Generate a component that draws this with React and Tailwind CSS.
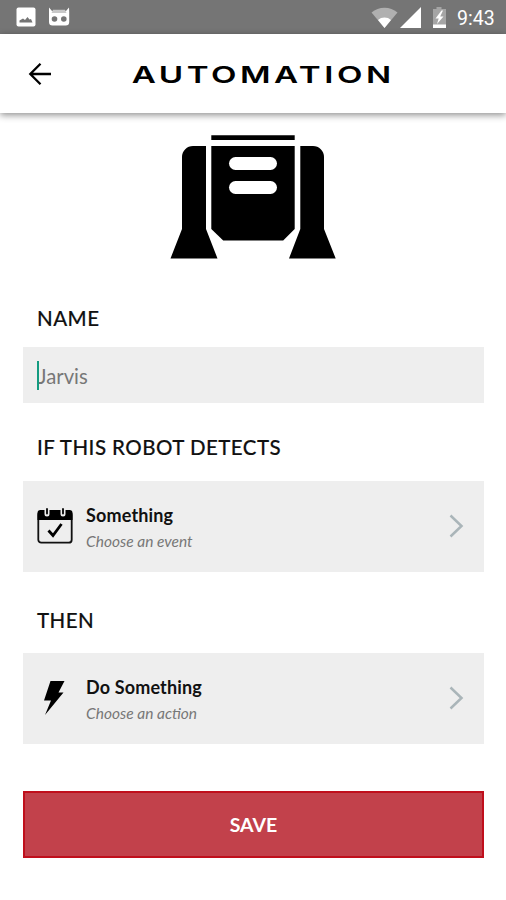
import React, { useState } from "react";

const StatusBar = () => (
  <div className="flex h-[34px] items-center justify-between bg-[#757575] pl-4 pr-[10px] text-white">
    <div className="flex items-center gap-[12px]">
      <svg className="h-5 w-5" viewBox="0 0 20 20">
        <rect x="0.5" y="0.5" width="19" height="19" rx="2" fill="#fff" />
        <path d="M3.500 15.500v-2L7 11.500l2 1.500 2.500-3 2 2.500 1.500-.5 1.500 3.500z" fill="#757575" />
      </svg>
      <svg className="h-5 w-[22px]" viewBox="0 0 22 20">
        <path
          d="M1 .5 4 4h14l3-3.500.2 4.500V15a3.500 3.500 0 0 1-3.500 3.500H4.500A3.500 3.500 0 0 1 1 15z"
          fill="#fff"
        />
        <path d="M5 2.700h12l1.500 3.300h-15z" fill="#c8c8c8" />
        <circle cx="6.500" cy="12" r="2.800" fill="#757575" />
        <circle cx="15.800" cy="12" r="2.800" fill="#757575" />
      </svg>
    </div>
    <div className="flex items-center">
      <svg className="h-[22px] w-[27px]" viewBox="0 0 27 22">
        <path d="M.5 6.500a20 20 0 0 1 26 0L13.500 22z" fill="#b0b0b0" />
        <path d="M7 14a10 10 0 0 1 13 0l-6.500 8z" fill="#fff" />
      </svg>
      <svg className="ml-[2px] h-[22px] w-[21px]" viewBox="0 0 21 22">
        <path d="M21 1v21H0z" fill="#fff" />
      </svg>
      <svg className="ml-[11px] h-[22px] w-[15px]" viewBox="0 0 15 22">
        <path d="M4.500 1h5v2H14v16H1V3h3.500z" fill="#a5a5a5" />
        <path d="M1 18.500h13V22H1z" fill="#fff" />
        <path d="M9.500 4.500 3.500 12.500h3.200L5 18l6.500-7.500H8.200L11 4.500z" fill="#fff" />
      </svg>
      <span className="ml-[10px] w-[39px] whitespace-nowrap pt-[3px] font-['Roboto',sans-serif] text-[19.5px] leading-none">
        9:43
      </span>
    </div>
  </div>
);

const Robot = () => (
  <svg className="ml-[147px] block h-[124px] w-[166px]" viewBox="170 135 166 124">
    <path d="M211.300 135.300h83.400v4.700h-83.400z" />
    <path d="M211.300 146h83.400v83l-11.500 11.500h-60L211.300 229z" />
    <path d="M206 146v83l11.500 29.500h-47L182 229v-72a11 11 0 0 1 11-11z" />
    <path d="M300.300 146v83L289 258.500h46.700L324 229v-72a11 11 0 0 0-11-11z" />
    <rect x="229" y="157" width="48" height="13" rx="6.500" fill="#fff" />
    <rect x="229" y="181" width="48" height="13" rx="6.500" fill="#fff" />
  </svg>
);

const CalendarIcon = () => (
  <svg className="h-9 w-9" viewBox="0 0 36 36">
    <rect x="1.300" y="4" width="33.400" height="30.700" rx="3" fill="none" stroke="#111" strokeWidth="1.800" />
    <path d="M.5 12V5a3 3 0 0 1 3-3h29a3 3 0 0 1 3 3v7z" />
    <path d="M10 0v6M26 0v6" stroke="#eee" strokeWidth="5" strokeLinecap="round" />
    <path d="M10 1v4.500M26 1v4.500" stroke="#000" strokeWidth="1.800" strokeLinecap="round" />
    <path d="m11.500 22.500 4.500 5 8.500-11.500" fill="none" stroke="#000" strokeWidth="2.800" />
  </svg>
);

const BoltIcon = () => (
  <svg className="h-9 w-9" viewBox="0 0 36 36">
    <path d="M13.500 1H27.500L21.500 12.500h5L8 35l6-14.500H7z" />
  </svg>
);

const Label = ({ children, className }) => (
  <h2
    className={`pl-[14px] text-[20.5px] font-medium leading-6 tracking-[0.45px] text-[#111] [-webkit-text-stroke:0.15px_#111] ${className}`}
  >
    {children}
  </h2>
);

const Row = ({ icon, title, subtitle }) => (
  <button className="flex h-[91px] w-full items-center bg-[#eeeeee] pb-[2px] pl-[14px] pr-5 text-left">
    {icon}
    <span className="ml-[13px] flex flex-1 flex-col pt-[4px]">
      <span className="text-[18px] font-bold leading-[26px] tracking-[0.15px] text-[#111]">{title}</span>
      <span className="text-[15.5px] italic leading-[26px] text-[#777]">{subtitle}</span>
    </span>
    <svg className="h-6 w-[15px]" viewBox="0 0 15 24">
      <path d="m1.500 1.500 11 10.500-11 10.500" fill="none" stroke="#aab5b9" strokeWidth="2.500" />
    </svg>
  </button>
);

export default function App() {
  const [name, setName] = useState("");

  return (
    <div className="h-[900px] w-[506px] overflow-hidden bg-white font-['Lato',sans-serif]">
      <StatusBar />

      <header className="grid h-[79px] grid-cols-[80px_1fr_60px] items-center bg-white shadow-[0_2px_7px_rgba(0,0,0,0.45)]">
        <button className="pl-7" aria-label="Back">
          <svg className="h-6 w-6" viewBox="0 0 24 24" fill="none" stroke="#000" strokeWidth="2.300">
            <path d="M23 12H2.500M12.500 1.800 2.300 12l10.200 10.200" />
          </svg>
        </button>
        <h1 className="origin-center scale-x-[1.41] justify-self-center whitespace-nowrap pt-[2px] font-['Inter',sans-serif] text-[23.5px] font-semibold leading-none tracking-[2.5px]">
          AUTOMATION
        </h1>
      </header>

      <main className="pl-[23px] pr-[22px] pt-[22px]">
        <Robot />

        <Label className="mt-[47px]">NAME</Label>
        <div className="relative mt-[17px] h-[56px] bg-[#eeeeee]">
          <input
            value={name}
            onChange={(e) => setName(e.target.value)}
            placeholder="Jarvis"
            className="h-full w-full bg-transparent pl-[15px] pt-[2px] text-[20.3px] outline-none placeholder:text-[#777]"
          />
          <span className="absolute left-[14px] top-[14px] h-[29px] w-[2px] bg-[#139b80]" />
        </div>

        <Label className="mt-[32px] mb-[22px]">IF THIS ROBOT DETECTS</Label>
        <Row icon={<CalendarIcon />} title="Something" subtitle="Choose an event" />

        <Label className="mt-[36px] mb-[21px]">THEN</Label>
        <Row icon={<BoltIcon />} title="Do Something" subtitle="Choose an action" />

        <button className="mt-[47px] h-[67px] w-full border-2 border-[#c00f1c] bg-[#c2414b] text-[19.5px] font-bold text-white">
          SAVE
        </button>
      </main>
    </div>
  );
}
